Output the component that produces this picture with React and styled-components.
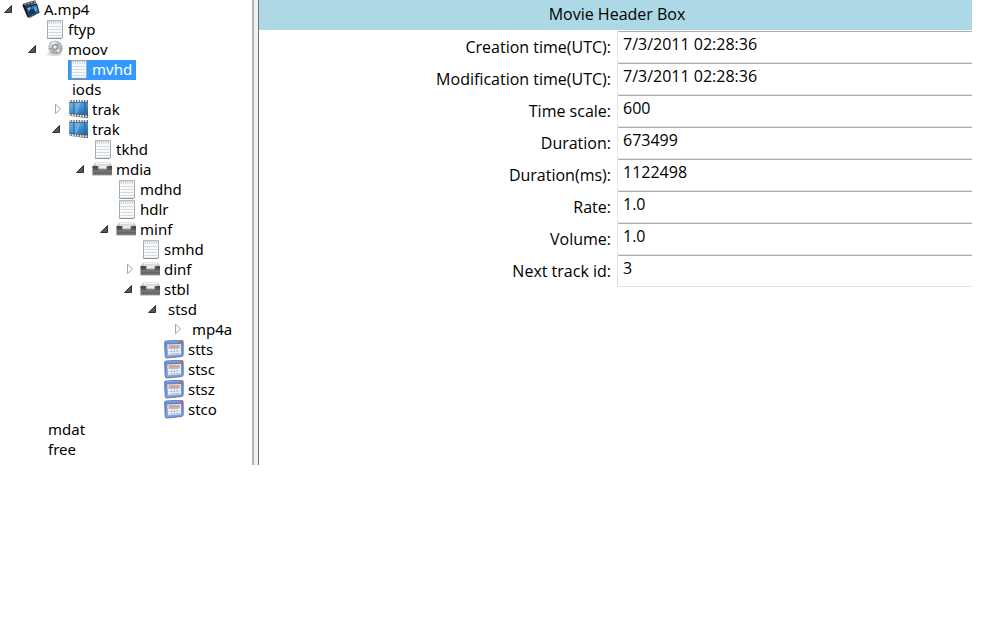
import { useState } from "react"
import styled, { createGlobalStyle } from "styled-components"

const GlobalStyle=createGlobalStyle`
*{box-sizing:border-box}
body{
    margin:0;
    background:#fff;
    color:#000;
    font-family:"Noto Sans","Open Sans",sans-serif;
    font-size:15px;
}
button,input{
    font:inherit;
    color:inherit;
}
`
const Window=styled.div`
display:flex;
padding-right:36px;
`
const Tree=styled.ul`
list-style:none;
margin:0;
padding:0 0 5px;
flex:0 0 252px;
overflow:hidden;
`
const Branch=styled.ul`
list-style:none;
margin:0;
padding:0 0 0 24px;
`
const Row=styled.div`
display:flex;
height:20px;
`
const Toggler=styled.button`
width:20px;
padding:0;
border:0;
background:none;
display:flex;
flex:none;
`
const Spacer=styled.span`
width:20px;
flex:none;
`
const NodeButton=styled.button`
display:flex;
align-items:flex-start;
height:20px;
padding:0 4px 0 0;
border:0;
line-height:18px;
white-space:nowrap;
background:${props=>props.$selected?'#3399ff':'none'};
color:${props=>props.$selected?'#fff':'#000'};
`
const NodeName=styled.span`
padding-left:4px;
`
const Glyph=styled.svg`
width:20px;
height:20px;
display:block;
flex:none;
`
const Defs=styled.svg`
position:absolute;
width:0;
height:0;
`
const Splitter=styled.div`
flex:0 0 7px;
background:#f0f0f0;
border-left:2px solid #b4b5b8;
border-right:1px solid #6f7072;
`
const Details=styled.main`
flex:1;
min-width:0;
font-family:"Open Sans","Noto Sans",sans-serif;
font-size:16px;
`
const Title=styled.h1`
margin:0;
padding:0 0 2px 3px;
height:30px;
line-height:28px;
background:#add8e6;
font-size:16px;
font-weight:400;
text-align:center;
`
const Form=styled.form`
padding:1px 0 0 3px;
`
const Field=styled.div`
display:grid;
grid-template-columns:1fr 1fr;
height:32px;
`
const Label=styled.label`
padding-right:6px;
line-height:32px;
text-align:right;
white-space:nowrap;
`
const Value=styled.input`
width:100%;
min-width:0;
padding:0 5px 7px;
border:1px solid #e2e3ea;
border-top-color:#abadb3;
border-right:0;
border-radius:2px 0 0 2px;
background:#fff;
outline:0;
`

const Gradients=()=>(
    <Defs aria-hidden="true">
        <defs>
            <linearGradient id="film" x1="0" y1="0" x2="1" y2="1">
                <stop offset="0" stopColor="#6db4ea"/>
                <stop offset=".5" stopColor="#3a93d8"/>
                <stop offset="1" stopColor="#145fa8"/>
            </linearGradient>
            <linearGradient id="lid" x1="0" y1="0" x2="0" y2="1">
                <stop offset="0" stopColor="#efefef"/>
                <stop offset="1" stopColor="#a2a2a2"/>
            </linearGradient>
            <linearGradient id="drawer" x1="0" y1="0" x2="0" y2="1">
                <stop offset="0" stopColor="#4c4c4c"/>
                <stop offset="1" stopColor="#727272"/>
            </linearGradient>
            <linearGradient id="frame" x1="0" y1="0" x2="0" y2="1">
                <stop offset="0" stopColor="#5b87cf"/>
                <stop offset="1" stopColor="#86a3d6"/>
            </linearGradient>
            <radialGradient id="disc" cx=".4" cy=".35" r=".75">
                <stop offset="0" stopColor="#e9e9e9"/>
                <stop offset=".6" stopColor="#b5b7b9"/>
                <stop offset="1" stopColor="#85878a"/>
            </radialGradient>
        </defs>
    </Defs>
)

const Movie=()=>(
    <Glyph viewBox="0 0 20 20" aria-hidden="true">
        <path d="M3.6 3.4 15.2.3l.9 2.6L6 6.6z" fill="#3c4650"/>
        <path d="M3.6 3.4 2.4 5.4l5.1 11.8 2.3.6L6 6.6z" fill="#161c25"/>
        <path d="M5.6 6 17 3.2l2.6 9.6-9.8 5z" fill="#1b2c40"/>
        <path d="M6.8 7.4 16.2 5l2 6.8-8.3 4z" fill="#2482bd"/>
        <path d="m6.8 7.4 6-1.5-2.5 3.9 3.4-1.2 2.3 3.9-6.1 3.3z" fill="#133859"/>
        <path d="m7.4 8 3.8-1-2.3 4.4z" fill="#85c9ee"/>
        <path d="m14 7.2 2.2-.5 1 3.7-2.4.5z" fill="#51a9dc"/>
        <path d="m4.6 4.3 10.2-2.7" stroke="#b2bdc7" strokeWidth="1.1" strokeDasharray="1.9 1.3"/>
        <path d="m10.4 16.6 8.3-4.2" stroke="#8298aa" strokeWidth=".8" strokeDasharray="1.3 1"/>
    </Glyph>
)
const Page=()=>(
    <Glyph viewBox="0 0 20 20" aria-hidden="true">
        <path d="M3.5.7h15v16.6l-1 1h-14z" fill="#f8fafb" stroke="#a9abad"/>
        <path d="M5 .8v3M7.3.8v3M9.6.8v3M11.9.8v3M14.2.8v3M16.5.8v3" stroke="#bfc1c3" strokeWidth=".9"/>
        <path d="M4.5 6.5h13M4.5 9.5h13M4.5 12.5h13M4.5 15.5h13" stroke="#cbdce6"/>
        <path d="M3.5 18.5h14l1.2-1.2" fill="none" stroke="#8f9193"/>
    </Glyph>
)
const Disc=()=>(
    <Glyph viewBox="0 0 20 20" aria-hidden="true">
        <ellipse cx="10.5" cy="13.9" rx="7.7" ry="2.2" fill="#dedede"/>
        <path d="m5.2 2.2 1.6-.2L8 .7l1.6.6L11.3.2l1.4.9 1.7-.2.9 1.3 1.7.5.2 1.7 1.4 1.1-.5 1.7.8 1.5-1 1.3-.1 1.8-1.7.6-.9 1.3-1.7-.2-1.5.9-1.6-.8-1.8.4-1.1-1.3-1.7-.4-.3-1.7-1.4-1.3.6-1.6-.6-1.7 1.1-1.3z" fill="url(#disc)"/>
        <path d="m7.8 3.2 3.4-1.4.4 3.3-2.2 1zM13.8 8.8l2.8 1.4-2.2 2.3-2.1-2z" fill="#f5f5f5" opacity=".8"/>
        <circle cx="11.2" cy="7.1" r="3.2" fill="#96999c"/>
        <circle cx="11" cy="7.1" r="1.7" fill="#eeeeef"/>
        <path d="m6 8.6 2-.5M13.3 5l1.9-1.6M9 11.4l.8-1.9" stroke="#7f8285" strokeWidth=".9"/>
    </Glyph>
)
const Film=()=>(
    <Glyph viewBox="0 0 20 20" aria-hidden="true">
        <path d="M1 0h19.5v18.4L1 15.8z" fill="#525960"/>
        <path d="M1 1h19.5M1 14.7l19.5 2" stroke="#e6e9ec" strokeWidth="2" strokeDasharray="1.7 1"/>
        <path d="M1 2.7h4.5v10.7L1 13zM6.6 2.7h9.8v11.8l-9.8-1zM17.5 2.7h3v12.2l-3-.3z" fill="url(#film)"/>
        <path d="M6.6 2.7h6.2L8.9 13.8l-2.3-.3z" fill="#9acff3" opacity=".35"/>
    </Glyph>
)
const Drawer=()=>(
    <Glyph viewBox="0 0 20 20" aria-hidden="true">
        <path d="M3 2h14.7l2.8 4.8H.5z" fill="url(#lid)"/>
        <path d="M4 2.7h13l.8 3.6H3z" fill="#dadada"/>
        <path d="M3.8 3.6h13.4" stroke="#f8f8f8"/>
        <path d="M.5 6.3h20v8.9H.5z" fill="url(#drawer)"/>
        <path d="M.5 7h20" stroke="#393939"/>
        <path d="M.5 11h20" stroke="#939393" strokeWidth=".8"/>
        <path d="M.5 14.8h20" stroke="#8d8d8d" strokeWidth=".7"/>
        <path d="M6 6.1h9.2v2.1L14 9.6H7.2L6 8.2z" fill="#b9b9b9"/>
        <path d="M7.2 6h6.8v2.2H7.2z" fill="#ececec"/>
    </Glyph>
)
const Grid=()=>(
    <Glyph viewBox="0 0 20 20" aria-hidden="true">
        <path d="M2 1 17.4.2q1.7 0 1.8 1.5v13q0 1.6-1.6 1.8L3 18q-1.6.1-1.8-1.6L.6 2.6Q.6 1.1 2 1z" fill="url(#frame)" stroke="#4469ad" strokeWidth=".8"/>
        <path d="M2.3 2 17 1.2" stroke="#8fb0e3" strokeWidth=".9"/>
        <path d="m15.6.5 2 .1q1.2.1 1.2 1.3v.8l-3.1.2z" fill="#d4654f"/>
        <path d="m3.2 4.6 13.8-.5v10.1L4 15.6z" fill="#e1e9f6"/>
        <path d="m4.6 5.3 11.3-.4v2.9l-11.2.5z" fill="#e7a47c"/>
        <path d="m4.8 9.2 11.1-.6v4.8l-10.8.9z" fill="#fff"/>
        <path d="m4.7 8.7 11.2-.5M4.8 11.5l11.1-.7M5 14.2l10.9-.9M7.7 5.3v8.8M10.4 5.1v8.7M13.2 5v8.6" fill="none" stroke="#a5b5d0" strokeWidth=".8"/>
    </Glyph>
)
const Arrow=({open})=>(
    <Glyph viewBox="0 0 20 20" aria-hidden="true">
        {open
            ? <path d="M11.5 5.5v7H4.6z" fill="#595959" stroke="#303030"/>
            : <path d="M7.5 4.2v9.4l5-4.7z" fill="#fff" stroke="#a6a6a6"/>}
    </Glyph>
)

const icons={movie:Movie,page:Page,disc:Disc,film:Film,drawer:Drawer,grid:Grid}

const boxes=[
    {id:'root',name:'A.mp4',icon:'movie',open:true,children:[
        {id:'ftyp',name:'ftyp',icon:'page'},
        {id:'moov',name:'moov',icon:'disc',open:true,children:[
            {id:'mvhd',name:'mvhd',icon:'page'},
            {id:'iods',name:'iods'},
            {id:'trak1',name:'trak',icon:'film',children:[]},
            {id:'trak2',name:'trak',icon:'film',open:true,children:[
                {id:'tkhd',name:'tkhd',icon:'page'},
                {id:'mdia',name:'mdia',icon:'drawer',open:true,children:[
                    {id:'mdhd',name:'mdhd',icon:'page'},
                    {id:'hdlr',name:'hdlr',icon:'page'},
                    {id:'minf',name:'minf',icon:'drawer',open:true,children:[
                        {id:'smhd',name:'smhd',icon:'page'},
                        {id:'dinf',name:'dinf',icon:'drawer',children:[]},
                        {id:'stbl',name:'stbl',icon:'drawer',open:true,children:[
                            {id:'stsd',name:'stsd',open:true,children:[
                                {id:'mp4a',name:'mp4a',children:[]}
                            ]},
                            {id:'stts',name:'stts',icon:'grid'},
                            {id:'stsc',name:'stsc',icon:'grid'},
                            {id:'stsz',name:'stsz',icon:'grid'},
                            {id:'stco',name:'stco',icon:'grid'}
                        ]}
                    ]}
                ]}
            ]}
        ]},
        {id:'mdat',name:'mdat'},
        {id:'free',name:'free'}
    ]}
]

const fields=[
    {id:'creation',label:'Creation time(UTC):',value:'7/3/2011 02:28:36'},
    {id:'modification',label:'Modification time(UTC):',value:'7/3/2011 02:28:36'},
    {id:'scale',label:'Time scale:',value:'600'},
    {id:'duration',label:'Duration:',value:'673499'},
    {id:'durationMs',label:'Duration(ms):',value:'1122498'},
    {id:'rate',label:'Rate:',value:'1.0'},
    {id:'volume',label:'Volume:',value:'1.0'},
    {id:'next',label:'Next track id:',value:'3'}
]

const TreeNode=(props)=>{
    const {node,selected,onSelect}=props
    const [open,setOpen]=useState(!!node.open)
    const Icon=icons[node.icon]
    return(
        <li>
            <Row>
                {node.children
                    ? <Toggler type="button" aria-label={`Toggle ${node.name}`} aria-expanded={open} onClick={()=>setOpen(!open)}>
                        <Arrow open={open}/>
                    </Toggler>
                    : <Spacer/>}
                <NodeButton type="button" $selected={selected===node.id} onClick={()=>onSelect(node.id)}>
                    {Icon && <Icon/>}
                    <NodeName>{node.name}</NodeName>
                </NodeButton>
            </Row>
            {open && node.children.length>0 &&
                <Branch>
                    {node.children.map(child=>
                        <TreeNode key={child.id} node={child} selected={selected} onSelect={onSelect}/>
                    )}
                </Branch>}
        </li>
    )
}

const App=()=>{
    const [selected,setSelected]=useState('mvhd')
    return(
        <>
            <GlobalStyle/>
            <Gradients/>
            <Window>
                <Tree>
                    {boxes.map(node=>
                        <TreeNode key={node.id} node={node} selected={selected} onSelect={setSelected}/>
                    )}
                </Tree>
                <Splitter/>
                <Details>
                    <Title>Movie Header Box</Title>
                    <Form>
                        {fields.map(field=>
                            <Field key={field.id}>
                                <Label htmlFor={field.id}>{field.label}</Label>
                                <Value id={field.id} defaultValue={field.value}/>
                            </Field>
                        )}
                    </Form>
                </Details>
            </Window>
        </>
    )
}
export default App
